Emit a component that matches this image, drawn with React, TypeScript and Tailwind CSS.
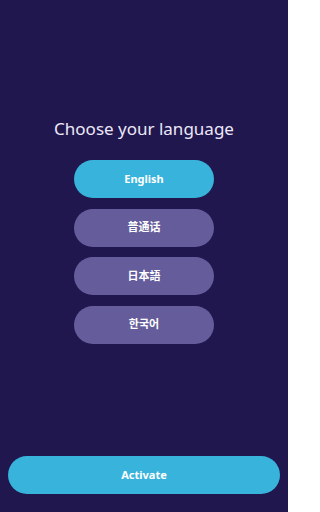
import React, { useState } from 'react';

const languages = ['English', '普通话', '日本語', '한국어'];

const App: React.FC = () => {
  const [selected, setSelected] = useState('English');

  return (
    <div
      className="flex flex-col w-[288px] h-[512px] bg-[#21174f] overflow-hidden"
      style={{ fontFamily: '"Noto Sans", "Noto Sans CJK SC", "Noto Sans CJK JP", "Noto Sans CJK KR", sans-serif' }}
    >
      <div className="flex flex-col items-center pt-[117px]">
        <h1 className="text-[17px] leading-[24px] text-[#ece8f7] font-normal">Choose your language</h1>
        <ul className="flex flex-col gap-[10.5px] mt-[19px]">
          {languages.map(lang => (
            <li key={lang}>
              <button
                onClick={() => setSelected(lang)}
                className={`w-[140px] h-[38px] rounded-full text-[11px] font-bold text-white ${
                  selected === lang ? 'bg-[#38b3dc]' : 'bg-[#655d9b]'
                }`}
              >
                {lang}
              </button>
            </li>
          ))}
        </ul>
      </div>
      <div className="mt-auto px-2 pb-[18px]">
        <button className="w-full h-[38px] rounded-full bg-[#38b3dc] text-white text-[11px] font-bold">
          Activate
        </button>
      </div>
    </div>
  );
};

export default App;
